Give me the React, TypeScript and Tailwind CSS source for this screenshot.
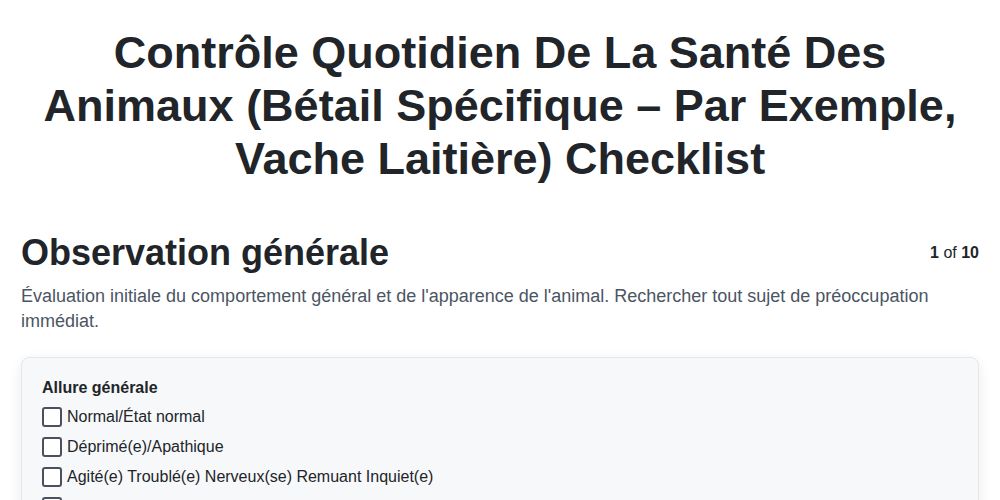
const options = [
  "Normal/État normal",
  "Déprimé(e)/Apathique",
  "Agité(e) Troublé(e) Nerveux(se) Remuant Inquiet(e)",
  "Couché(e) et refusant de se lever",
];

export default function App() {
  return (
    <div className="min-h-screen bg-white text-[#212529]" style={{ fontFamily: '"Liberation Sans", Arial, sans-serif' }}>
      <h1 className="px-10 pt-[26px] text-center text-[45px] font-bold leading-[53px]">
        Contrôle Quotidien De La Santé Des Animaux (Bétail Spécifique – Par Exemple, Vache Laitière) Checklist
      </h1>

      <main className="px-[21px] pt-[46px]">
        <div className="flex items-center justify-between">
          <h2 className="text-[36px] font-bold leading-[44px]">Observation générale</h2>
          <div className="text-[16px]">
            <span className="font-bold">1</span> of <span className="font-bold">10</span>
          </div>
        </div>
        <p className="mt-[9px] text-[18px] leading-[25px] text-[#4b5563]">
          Évaluation initiale du comportement général et de l'apparence de l'animal. Rechercher tout sujet de préoccupation immédiat.
        </p>

        <section className="mt-[23px] rounded-lg border border-[#e5e7eb] bg-[#f7f8fa] px-5 pt-5 pb-5 shadow-[0_4px_14px_rgba(0,0,0,0.08)]">
          <div className="text-[16px] font-bold leading-5">Allure générale</div>
          <ul className="mt-[9px] flex flex-col gap-[10px]">
            {options.map((o) => (
              <li key={o} className="flex items-center gap-[5px] text-[16px] leading-5">
                <span className="h-5 w-5 shrink-0 rounded-[3px] border-2 border-[#4b5060] bg-white" />
                <span>{o}</span>
              </li>
            ))}
          </ul>
        </section>
      </main>
    </div>
  );
}
